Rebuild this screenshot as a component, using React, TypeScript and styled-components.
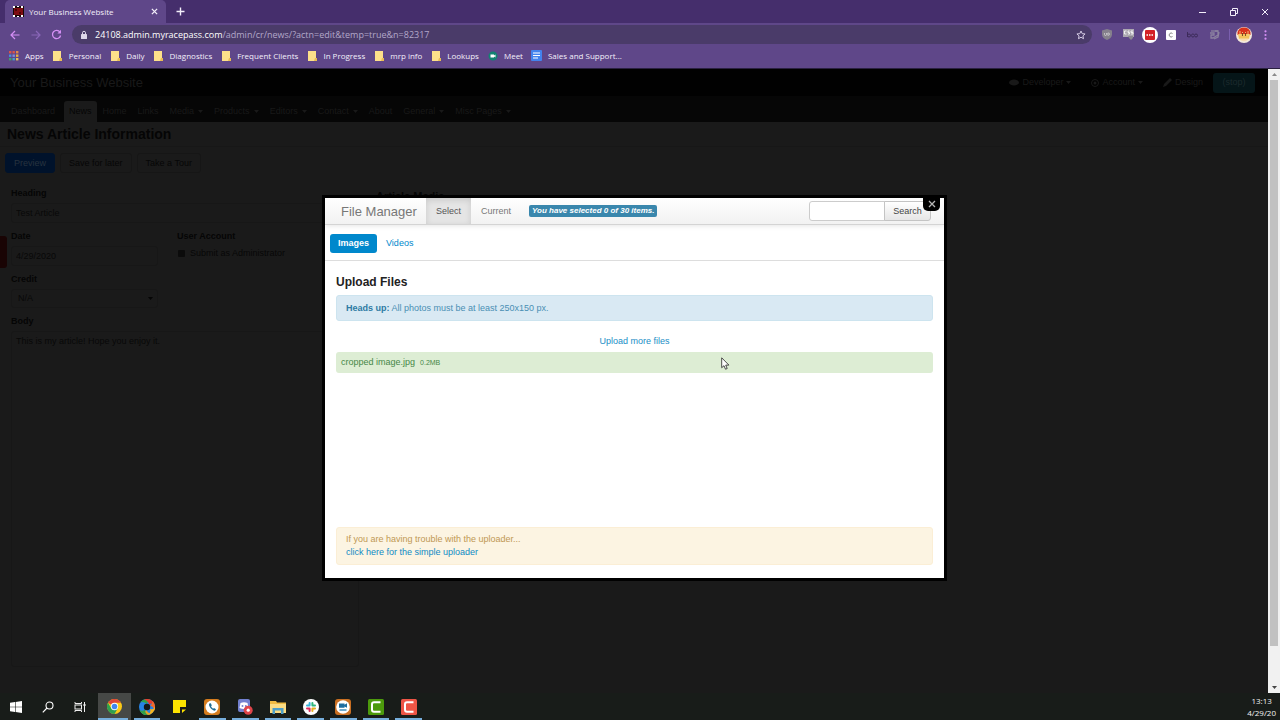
import React from "react";
import styled, { createGlobalStyle, css } from "styled-components";

const GlobalStyle = createGlobalStyle`
  * { box-sizing: border-box; }
  body { margin: 0; background: #1a1a1a; font-family: "Liberation Sans", Arial, sans-serif; font-size: 9px; line-height: 13px; }
  button, input, select, textarea { font: inherit; margin: 0; padding: 0; border: 0; background: none; color: inherit; border-radius: 0; outline: none; }
  h1, h2, p { margin: 0; }
  a { text-decoration: none; }
  svg { display: block; flex: none; }
`;

const uiFont = '"Open Sans", "Noto Sans", sans-serif';

const Screen = styled.div`
  min-height: 100vh;
  display: flex;
  flex-direction: column;
`;

/* ---------- browser chrome ---------- */
const Browser = styled.header`
  font-family: ${uiFont};
  color: #f3effa;
  background: #5f4789;
  border-bottom: 1px solid #2a2140;
`;
const TabStrip = styled.div`
  height: 23px;
  display: flex;
  align-items: center;
  background: #452e6c;
  padding-left: 5px;
`;
const Tab = styled.div`
  width: 161px;
  height: 23px;
  display: flex;
  align-items: center;
  gap: 5px;
  padding: 0 6px 0 8px;
  background: #5f4789;
  border-radius: 5px 5px 0 0;
  font-size: 8px;
`;
const TabTitle = styled.span`
  flex: 1;
`;
const IconButton = styled.button<{ $w?: number; $color?: string }>`
  width: ${(p) => p.$w ?? 12}px;
  height: 20px;
  display: flex;
  align-items: center;
  justify-content: center;
  color: ${(p) => p.$color ?? "#f3effa"};
`;
const NewTab = styled(IconButton)`
  margin-left: 8px;
`;
const WindowButtons = styled.div`
  margin-left: auto;
  display: flex;
`;
const Toolbar = styled.div`
  height: 23px;
  display: flex;
  align-items: center;
  padding: 0 4px;
`;
const Omnibox = styled.div`
  flex: 1;
  height: 19px;
  margin: 0 4px 0 5px;
  padding: 0 3px 0 8px;
  display: flex;
  align-items: center;
  gap: 7px;
  border-radius: 10px;
  background: #4a3b69;
  font-size: 9px;
`;
const Address = styled.div`
  flex: 1;
  color: #b3a8c9;
  white-space: nowrap;
`;
const Host = styled.span`
  color: #ffffff;
`;
const Extensions = styled.div`
  width: 129px;
  display: grid;
  grid-template-columns: repeat(6, 1fr);
  justify-items: center;
`;
const Divider = styled.span`
  width: 1px;
  height: 11px;
  margin: 0 3px 0 4px;
  background: #7a5fae;
`;
const Bookmarks = styled.nav`
  height: 22px;
  display: flex;
  align-items: center;
  gap: 8px;
  padding: 0 8px 3px;
  font-size: 8px;
`;
const Bookmark = styled.a`
  display: flex;
  align-items: center;
  gap: 5px;
  color: #f3effa;
  white-space: nowrap;
`;
const BookmarkIcon = styled.span`
  width: 12px;
  display: flex;
  justify-content: center;
`;

/* ---------- dimmed admin page ---------- */
const Viewport = styled.div`
  flex: 1;
  display: flex;
`;
const Page = styled.main`
  flex: 1;
  position: relative;
  background: #1a1a1a;
  color: #050505;
`;
const SiteBar = styled.div`
  height: 27px;
  display: flex;
  align-items: center;
  background: #010101;
  padding: 0 13px 0 10px;
  color: #131313;
`;
const SiteName = styled.a`
  flex: 1;
  font-size: 13px;
  color: #191919;
`;
const SiteLink = styled.a`
  display: flex;
  align-items: center;
  gap: 3px;
  margin-right: 20px;
  color: #191919;
`;
const StopButton = styled.button`
  height: 20px;
  width: 42px;
  margin-left: -10px;
  border-radius: 3px;
  background: #051518;
  color: #1c2a2d;
`;
const SiteNav = styled.nav`
  height: 26px;
  display: flex;
  align-items: flex-end;
  background: #060606;
  padding-left: 6px;
`;
const SiteTab = styled.a<{ $active?: boolean }>`
  height: 21px;
  display: flex;
  align-items: center;
  gap: 4px;
  padding: 0 5px;
  margin-right: 1px;
  color: #191919;
  ${(p) => p.$active && css`
    background: #1a1a1a;
    color: #050505;
    border-radius: 3px 3px 0 0;
    margin: 0 1px 0 3px;
  `}
`;
const Title = styled.h1`
  font-size: 14px;
  line-height: 24px;
  padding: 0 7px;
  border-bottom: 1px solid #171717;
`;
const Actions = styled.div`
  display: flex;
  gap: 5px;
  padding: 6px 5px 0;
`;
const ActionButton = styled.button<{ $primary?: boolean }>`
  height: 20px;
  padding: 0 8px;
  border: 1px solid ${(p) => (p.$primary ? "#00122b" : "#161616")};
  border-radius: 3px;
  background: ${(p) => (p.$primary ? "#00122b" : "#1a1a1a")};
  color: ${(p) => (p.$primary ? "#27323f" : "#060606")};
`;
const Form = styled.form`
  width: 348px;
  margin: 14px 0 0 11px;
  display: flex;
  flex-direction: column;
  gap: 7px;
`;
const Row = styled.div`
  display: flex;
  gap: 19px;
`;
const Field = styled.div<{ $w?: number }>`
  width: ${(p) => (p.$w ? `${p.$w}px` : "auto")};
  display: flex;
  flex-direction: column;
  gap: 3px;
`;
const Label = styled.label`
  font-weight: bold;
`;
const inputLook = css`
  width: 100%;
  height: 20px;
  padding: 0 4px;
  border: 1px solid #171717;
  border-radius: 3px;
  color: #080808;
`;
const TextInput = styled.input`
  ${inputLook}
`;
const SelectBox = styled.div`
  position: relative;
  svg { position: absolute; right: 5px; top: 8px; }
`;
const Select = styled.select`
  ${inputLook}
  appearance: none;
  height: 19px;
  padding-left: 6px;
`;
const TextArea = styled.textarea`
  ${inputLook}
  height: 336px;
  padding: 3px 4px;
  resize: none;
  display: block;
`;
const CheckLabel = styled.label`
  display: flex;
  align-items: center;
  gap: 5px;
  padding: 1px 0 0 1px;
  color: #070707;
`;
const Checkbox = styled.input`
  appearance: none;
  width: 7px;
  height: 7px;
  border-radius: 1px;
  background: #0b0b0b;
`;
const SideTab = styled.button`
  position: absolute;
  left: 0;
  top: 167px;
  width: 7px;
  height: 32px;
  border-radius: 0 3px 3px 0;
  background: #190404;
`;
const MediaHeading = styled.h2`
  position: absolute;
  left: 376px;
  top: 120px;
  font-size: 11px;
  line-height: 14px;
`;

/* ---------- dialog ---------- */
const Overlay = styled.div`
  position: absolute;
  inset: 0;
  display: flex;
  align-items: center;
  justify-content: center;
  padding: 14px 0 0 1px;
`;
const Dialog = styled.section`
  position: relative;
  width: 100%;
  max-width: 625px;
  border: 3px solid #000;
  background: #fff;
  color: #333;
`;
const CloseButton = styled.button`
  position: absolute;
  right: 4px;
  top: -1px;
  width: 17px;
  height: 14px;
  display: flex;
  align-items: center;
  justify-content: center;
  border-radius: 0 0 5px 5px;
  background: #000;
  color: #b5b5b5;
`;
const DialogBar = styled.div`
  height: 27px;
  display: flex;
  align-items: stretch;
  padding: 0 13px 0 16px;
  background: linear-gradient(#ffffff, #f2f2f2);
  border-bottom: 1px solid #d4d4d4;
  box-shadow: 0 1px 5px rgba(0, 0, 0, 0.1);
  color: #777;
`;
const DialogTitle = styled.h2`
  width: 85px;
  font-size: 13px;
  font-weight: normal;
  line-height: 27px;
`;
const BarTab = styled.button<{ $active?: boolean }>`
  padding: 0 10px;
  color: ${(p) => (p.$active ? "#555" : "#777")};
  ${(p) => p.$active && css`
    background: #e5e5e5;
    box-shadow: inset 0 2px 6px rgba(0, 0, 0, 0.125);
  `}
`;
const Counter = styled.span`
  align-self: center;
  margin: 0 auto 1px 8px;
  padding: 0 3px;
  border-radius: 2px;
  background: #3a87ad;
  color: #fff;
  font-size: 8px;
  line-height: 12px;
  font-weight: bold;
  font-style: italic;
  white-space: nowrap;
`;
const Search = styled.form`
  display: flex;
  align-items: center;
`;
const SearchInput = styled.input`
  width: 76px;
  height: 20px;
  padding: 0 4px;
  border: 1px solid #ccc;
  border-radius: 3px 0 0 3px;
  background: #fff;
`;
const SearchButton = styled.button`
  width: 47px;
  height: 20px;
  margin-left: -1px;
  border: 1px solid #c4c4c4;
  border-radius: 0 3px 3px 0;
  background: linear-gradient(#fff, #e6e6e6);
  color: #444;
`;
const Pills = styled.nav`
  display: flex;
  height: 36px;
  padding: 9px 5px 0;
  gap: 1px;
  border-bottom: 1px solid #ddd;
`;
const Pill = styled.a<{ $active?: boolean }>`
  height: 19px;
  padding: 0 8px;
  line-height: 19px;
  border-radius: 3px;
  color: #0088cc;
  ${(p) => p.$active && css`
    background: #0088cc;
    color: #fff;
    font-weight: bold;
  `}
`;
const DialogBody = styled.div`
  min-height: 317px;
  padding: 13px 11px;
  display: flex;
  flex-direction: column;
`;
const SectionTitle = styled.h2`
  font-size: 12px;
  line-height: 16px;
  color: #222;
`;
const Notice = styled.p<{ $kind: "info" | "warning" }>`
  padding: 5px 9px;
  border: 1px solid ${(p) => (p.$kind === "info" ? "#cde4ef" : "#fbeed5")};
  border-radius: 3px;
  background: ${(p) => (p.$kind === "info" ? "#d9e9f3" : "#fcf4e2")};
  color: ${(p) => (p.$kind === "info" ? "#4a8fb3" : "#c09853")};
  strong { color: #2f7ba3; }
  a { color: #0f8ac4; }
`;
const InfoNotice = styled(Notice)`
  margin-top: 5px;
  line-height: 14px;
`;
const UploadMore = styled.a`
  align-self: center;
  margin: 14px 0 4px;
  color: #1a8ec6;
`;
const FileRow = styled.div`
  height: 21px;
  display: flex;
  align-items: center;
  gap: 5px;
  padding: 0 5px;
  border-radius: 3px;
  background: #ddedd4;
  color: #468847;
  small { font-size: 7px; }
`;
const WarningNotice = styled(Notice)`
  margin-top: auto;
`;
const Cursor = styled.svg`
  position: absolute;
  left: 396px;
  top: 159px;
`;

/* ---------- scrollbar and taskbar ---------- */
const Scrollbar = styled.div`
  width: 12px;
  display: flex;
  flex-direction: column;
  align-items: center;
  background: #f1f1f1;
`;
const ScrollButton = styled.button`
  width: 12px;
  height: 11px;
  display: flex;
  align-items: center;
  justify-content: center;
`;
const ScrollTrack = styled.div`
  flex: 1;
  width: 8px;
`;
const ScrollThumb = styled.div`
  height: 94%;
  background: #c1c1c1;
`;
const Taskbar = styled.footer`
  height: 27px;
  display: flex;
  background: #181c19;
  color: #f2f2f2;
  font-family: ${uiFont};
`;
const TaskSystem = styled.div`
  display: flex;
  margin-right: 2px;
`;
const TaskApps = styled.div`
  width: 327px;
  display: grid;
  grid-template-columns: repeat(10, 1fr);
`;
const TaskButton = styled.button<{ $open?: boolean; $active?: boolean }>`
  min-width: 32px;
  height: 27px;
  display: flex;
  align-items: center;
  justify-content: center;
  position: relative;
  background: ${(p) => (p.$active ? "#464846" : "transparent")};
  ${(p) => p.$open && css`
    &::after {
      content: "";
      position: absolute;
      left: ${p.$active ? 0 : 3}px;
      right: 3px;
      bottom: 0;
      height: 2px;
      background: #76aedc;
    }
  `}
`;
const Clock = styled.time`
  margin-left: auto;
  padding: 2px 4px 0 0;
  font-size: 8px;
  line-height: 12px;
  text-align: center;
`;

/* ---------- icons ---------- */
const Caret = () => (
  <svg width="5" height="3" viewBox="0 0 5 3"><path d="M0 0h5L2.5 3z" fill="currentColor" /></svg>
);
const Cross = ({ size = 7, w = 1.2 }: { size?: number; w?: number }) => (
  <svg width={size} height={size} viewBox="0 0 8 8"><path d="M1 1l6 6M7 1L1 7" stroke="currentColor" strokeWidth={w} fill="none" /></svg>
);
const Favicon = () => (
  <svg width="11" height="11" viewBox="0 0 11 11">
    <rect width="11" height="11" fill="#160808" />
    <rect x="1" y="2" width="9" height="7" fill="#7d0d12" />
    <path d="M0 0h2v2H0zM4 0h2v1H4zM8 0h2v2H8zM0 9h2v2H0zM4 10h2v1H4zM8 9h2v2H8z" fill="#fff" />
    <path d="M2 3h2v2H2zM6 6h2v2H6z" fill="#4a0508" />
  </svg>
);
const Folder = () => (
  <svg width="9" height="10" viewBox="0 0 9 10"><path d="M0 0h8v7l1 1v2H0z" fill="#fde08a" /><path d="M7 7h2v3H6z" fill="#e9bd55" /></svg>
);
const AppsGrid = () => (
  <svg width="10" height="10" viewBox="0 0 10 10">
    {["#d9534a", "#d9534a", "#e0884a", "#4a8be0", "#7e8fd8", "#e8b040", "#3fa565", "#45a0c8", "#e8c05a"].map((c, i) => (
      <rect key={i} x={(i % 3) * 3.5} y={Math.floor(i / 3) * 3.5} width="2.4" height="2.4" fill={c} />
    ))}
  </svg>
);
const MeetIcon = () => (
  <svg width="10" height="10" viewBox="0 0 10 10"><circle cx="5" cy="5" r="4.5" fill="#128272" /><path d="M2.5 3.5h3.5v1l1.5-1v3L6 5.6v.9H2.5z" fill="#fff" /></svg>
);
const DocsIcon = () => (
  <svg width="11" height="11" viewBox="0 0 11 11"><rect width="11" height="11" rx="1" fill="#4383ee" /><path d="M2 3h7M2 5.5h7M2 8h5" stroke="#fff" strokeWidth="1.2" /></svg>
);
const Star = () => (
  <svg width="10" height="10" viewBox="0 0 24 24" fill="none" stroke="currentColor" strokeWidth="2.4"><path d="M12 2.5l2.9 6.3 6.9.7-5.2 4.6 1.5 6.800L12 17.400l-6.100 3.500 1.500-6.800L2.200 9.500l6.900-.7z" /></svg>
);
const Lock = () => (
  <svg width="8" height="10" viewBox="0 0 8 10"><rect x="1" y="4" width="6" height="5" rx=".6" fill="#dcd5e8" /><path d="M2.5 4.5V2.8a1.5 1.5 0 013 0v1.700" stroke="#dcd5e8" fill="none" /></svg>
);
const Arrow = ({ flip }: { flip?: boolean }) => (
  <svg width="10" height="10" viewBox="0 0 10 10" fill="none" stroke="currentColor" strokeWidth="1.2">
    {flip ? <path d="M.5 5h8.500M5 1l4 4-4 4" /> : <path d="M9.500 5H1M5 1L1 5l4 4" />}
  </svg>
);
const Reload = () => (
  <svg width="11" height="11" viewBox="0 0 11 11" fill="none" stroke="currentColor" strokeWidth="1.3"><path d="M9 3.200A4.100 4.100 0 109.600 6.500" /><path d="M10 .8v3.600H6.400z" fill="currentColor" stroke="none" /></svg>
);
const Shield = () => (
  <svg width="10" height="11" viewBox="0 0 10 11"><path d="M5 0l5 1.500v4C10 8 8 10 5 11 2 10 0 8 0 5.500v-4z" fill="#85808c" /><path d="M2.500 4v1.500q0 1 1 1t1-1V4M5.800 4v2.300h.6q1.100-.2 1.100-1.200T6.400 4z" stroke="#ddd" strokeWidth=".7" fill="none" /></svg>
);
const CssIcon = () => (
  <svg width="11" height="11" viewBox="0 0 11 11"><rect width="11" height="8" fill="#aba7b0" /><path d="M3.500 2H1.500v3h2M6.500 2H5v1.500h1.500V5H5M10 2H8v1.500h2V5H8" stroke="#fff" strokeWidth=".8" fill="none" /><path d="M5 7h5v2L8 11 6 9z" fill="#8b8891" /></svg>
);
const RedDots = () => (
  <svg width="16" height="16" viewBox="0 0 16 16"><circle cx="8" cy="8" r="8" fill="#fff" /><rect x="3" y="3" width="10" height="10" rx="1" fill="#d32027" /><path d="M4.500 8h7" stroke="#fff" strokeWidth="1.5" strokeDasharray="1.5 1" /></svg>
);
const CSquare = () => (
  <svg width="10" height="10" viewBox="0 0 10 10"><rect width="10" height="10" rx="1" fill="#fff" /><path d="M6.500 3.500a2 2 0 100 3" stroke="#888" fill="none" /></svg>
);
const Bco = () => (
  <svg width="11" height="6" viewBox="0 0 11 6" fill="none" stroke="#3c2b59" strokeWidth="1"><path d="M.5 0v5M7 2.500a1.500 1.500 0 100 2" /><circle cx="2" cy="3.5" r="1.5" /><circle cx="9" cy="3.5" r="1.5" /></svg>
);
const Swirl = () => (
  <svg width="11" height="10" viewBox="0 0 11 10" fill="none" stroke="#8c82a0" strokeWidth="1.3"><path d="M1 3h4v2H2v3h2l5-3V1H6M5 9l4-2 1-5" /><path d="M2 1h7" /></svg>
);
const Avatar = () => (
  <svg width="16" height="16" viewBox="0 0 16 16"><circle cx="8" cy="8" r="8" fill="#f4e9dc" /><path d="M1.500 5a7 7 0 0113 0v3h-13z" fill="#d8321c" /><path d="M2 7h12l-1 5H3z" fill="#f3c35c" /><path d="M4 4v5M6.500 5v4M9.500 5v4M12 4v5" stroke="#f8d48c" strokeWidth=".8" /><path d="M6.500 6v3M9.500 6v3" stroke="#5a2612" strokeWidth=".8" /><path d="M3 11.500h10a6 6 0 01-10 0z" fill="#f8dcae" /></svg>
);
const Dots = () => (
  <svg width="3" height="10" viewBox="0 0 3 10" fill="currentColor"><circle cx="1.5" cy="1.3" r="1.1" /><circle cx="1.5" cy="5" r="1.1" /><circle cx="1.5" cy="8.7" r="1.1" /></svg>
);

const WindowsLogo = () => (
  <svg width="12" height="12" viewBox="0 0 12 12"><path d="M0 1.700L5 1v4.700H0zM5.600.9L12 0v5.700H5.600zM0 6.300h5V11l-5-.7zM5.600 6.300H12V12l-6.400-.9z" fill="#fff" /></svg>
);
const SearchGlyph = () => (
  <svg width="12" height="12" viewBox="0 0 12 12" fill="none" stroke="#fff" strokeWidth="1.1"><circle cx="7.5" cy="4.5" r="3.5" /><path d="M5 7L.8 11.400" /></svg>
);
const TaskView = () => (
  <svg width="12" height="12" viewBox="0 0 12 12" fill="none" stroke="#eee"><path d="M1 1v1.500h6.500V1M1 11V9.500h6.500V11" /><rect x="1" y="4" width="6.5" height="4" /><path d="M10.500 1v10" /><path d="M9.500 4h2" strokeWidth="2" /></svg>
);
const ChromeLogo = () => (
  <svg width="15" height="15" viewBox="0 0 16 16"><circle cx="8" cy="8" r="8" fill="#fbc916" /><path d="M8 8L1.070 4A8 8 0 0114.930 4H8z" fill="#e0473a" /><path d="M1.070 4A8 8 0 008 16l3.460-6L8 8 4.540 10z" fill="#2fa04f" /><circle cx="8" cy="8" r="3.9" fill="#fff" /><circle cx="8" cy="8" r="3" fill="#4286f0" /></svg>
);
const Pinwheel = () => (
  <svg width="16" height="16" viewBox="0 0 16 16">
    <circle cx="8" cy="8" r="8" fill="#2684e6" />
    <path d="M1.500 3.300A8 8 0 0113 1.800Q9 1.500 7.500 5 5 2 1.500 3.300z" fill="#30a14a" />
    <path d="M5 .6A8 8 0 0115.800 6Q14 3.500 10 5.500 9 1.500 5 .6z" fill="#e33b2e" />
    <path d="M13 1.800A8 8 0 0115 12q0-5-4-5 3-2 2-5.200z" fill="#f2682a" />
    <path d="M16 7.500A8 8 0 018.500 16q4-2 2.500-6 4 1 5-2.500z" fill="#f8b51c" />
    <path d="M12.500 14.600A8 8 0 011.500 12.600q4 1.400 6-1.600 1 3 5 3.600z" fill="#e8a322" />
    <path d="M9 16A8 8 0 01.5 10.800Q3 13 6 10.500q0 4 3 5.500z" fill="#30a14a" />
    <circle cx="8" cy="8" r="3.2" fill="#14181a" />
  </svg>
);
const StickyNote = () => (
  <svg width="13" height="13" viewBox="0 0 13 13"><path d="M0 0h13v8l-5 5H0z" fill="#fde300" /><path d="M7 7h6v2L9 13H7z" fill="#1b1b1b" /><path d="M9 13V9.500h4z" fill="#fde300" /></svg>
);
const PhoneApp = () => (
  <svg width="16" height="16" viewBox="0 0 16 16"><rect width="16" height="16" rx="3" fill="#d57c1e" /><circle cx="8" cy="8" r="6.5" fill="#fff" /><path d="M5.200 4.500c-1 2.500 2.500 7 5.800 7.200l1-1.500-2-1.200-.9.700Q7.500 8.800 7 7.300l.8-.8-.9-2.300z" fill="#1f6c94" /></svg>
);
const DiscordApp = () => (
  <svg width="16" height="16" viewBox="0 0 16 16"><rect x="1" width="12" height="13" rx="2" fill="#7280cf" /><path d="M3.500 4Q7 2.500 10.500 4L11.500 9Q7 11 2.500 9z" fill="#fff" /><circle cx="5.5" cy="7" r="1" fill="#7280cf" /><circle cx="8.8" cy="7" r="1" fill="#7280cf" /><circle cx="11.2" cy="11.2" r="4.5" fill="#e0454a" /><circle cx="11.2" cy="11.2" r="1.6" fill="#fff" /></svg>
);
const Explorer = () => (
  <svg width="16" height="14" viewBox="0 0 16 14"><path d="M0 1h6l1 1.500h9V13H0z" fill="#f0bb43" /><path d="M0 4h16v9H0z" fill="#fadc84" /><path d="M2.500 14V8h11v6H11v-3.500H5V14z" fill="#4e9fc8" /></svg>
);
const SlackApp = () => (
  <svg width="16" height="16" viewBox="0 0 16 16"><circle cx="8" cy="8" r="8" fill="#fff" /><g strokeWidth="2" strokeLinecap="round"><path d="M6.600 4v2.600M4 6.600h2.600" stroke="#36b6dc" /><path d="M9.400 4v2.600M9.400 6.600H12" stroke="#2eb67d" /><path d="M9.400 9.400V12M9.400 9.400H12" stroke="#e6ac22" /><path d="M6.600 9.400V12M4 9.400h2.600" stroke="#df2b5d" /></g></svg>
);
const MeetingApp = () => (
  <svg width="16" height="16" viewBox="0 0 16 16"><rect width="16" height="16" rx="3" fill="#c96f22" /><circle cx="8" cy="8" r="6.8" fill="#fff" /><path d="M4 4.500h5.500v1.200L12 4.300v4.400L9.500 7.400v1.300H4z" fill="#1c6da0" /><path d="M4.500 11h7" stroke="#3f8fbe" strokeWidth="1.5" /></svg>
);
const Camtasia = ({ color }: { color: string }) => (
  <svg width="16" height="16" viewBox="0 0 16 16"><rect width="16" height="16" rx="1.5" fill={color} /><path d="M12.500 3.200H6Q4 3.200 4 5.200v5.600q0 2 2 2h6.500" fill="none" stroke="#fff" strokeWidth="2" /></svg>
);

const bookmarks: [string, React.ReactNode][] = [
  ["Apps", <AppsGrid />],
  ["Personal", <Folder />],
  ["Daily", <Folder />],
  ["Diagnostics", <Folder />],
  ["Frequent Clients", <Folder />],
  ["In Progress", <Folder />],
  ["mrp info", <Folder />],
  ["Lookups", <Folder />],
  ["Meet", <MeetIcon />],
  ["Sales and Support...", <DocsIcon />],
];

const siteTabs: [string, boolean][] = [
  ["Dashboard", false],
  ["News", false],
  ["Home", false],
  ["Links", false],
  ["Media", true],
  ["Products", true],
  ["Editors", true],
  ["Contact", true],
  ["About", false],
  ["General", true],
  ["Misc Pages", true],
];

const apps: [string, React.ReactNode][] = [
  ["Chrome", <ChromeLogo />],
  ["Pinwheel", <Pinwheel />],
  ["Sticky Notes", <StickyNote />],
  ["Phone", <PhoneApp />],
  ["Discord", <DiscordApp />],
  ["File Explorer", <Explorer />],
  ["Slack", <SlackApp />],
  ["Meeting", <MeetingApp />],
  ["Camtasia", <Camtasia color="#4c9a0c" />],
  ["Recorder", <Camtasia color="#ee5546" />],
];

export default function App() {
  return (
    <Screen>
      <GlobalStyle />
      <Browser>
        <TabStrip>
          <Tab>
            <Favicon />
            <TabTitle>Your Business Website</TabTitle>
            <IconButton aria-label="Close tab"><Cross w={1.5} /></IconButton>
          </Tab>
          <NewTab aria-label="New tab">
            <svg width="9" height="9" viewBox="0 0 9 9"><path d="M4.500 0.500v8M.5 4.500h8" stroke="currentColor" strokeWidth="1.4" /></svg>
          </NewTab>
          <WindowButtons>
            <IconButton $w={31} aria-label="Minimize"><svg width="8" height="8" viewBox="0 0 8 8"><path d="M0 4.500h7" stroke="currentColor" /></svg></IconButton>
            <IconButton $w={31} aria-label="Restore"><svg width="8" height="8" viewBox="0 0 8 8" fill="none" stroke="currentColor"><path d="M.5 2.500h5v5h-5zM2.500 2V.5h5v5H6" /></svg></IconButton>
            <IconButton $w={31} aria-label="Close"><Cross size={8} w={1} /></IconButton>
          </WindowButtons>
        </TabStrip>
        <Toolbar>
          <IconButton $w={21} $color="#d58ff5" aria-label="Back"><Arrow /></IconButton>
          <IconButton $w={21} $color="#8a67b8" aria-label="Forward"><Arrow flip /></IconButton>
          <IconButton $w={21} $color="#d58ff5" aria-label="Reload"><Reload /></IconButton>
          <Omnibox>
            <Lock />
            <Address role="textbox" aria-label="Address" tabIndex={0}><Host>24108.admin.myracepass.com</Host>/admin/cr/news/?actn=edit&amp;temp=true&amp;n=82317</Address>
            <IconButton $w={16} $color="#d5cce4" aria-label="Bookmark this page"><Star /></IconButton>
          </Omnibox>
          <Extensions>
            <IconButton $w={16} aria-label="Ad blocker"><Shield /></IconButton>
            <IconButton $w={16} aria-label="CSS"><CssIcon /></IconButton>
            <IconButton $w={16} aria-label="Passwords"><RedDots /></IconButton>
            <IconButton $w={16} aria-label="Clip"><CSquare /></IconButton>
            <IconButton $w={16} aria-label="Board"><Bco /></IconButton>
            <IconButton $w={16} aria-label="Notes"><Swirl /></IconButton>
          </Extensions>
          <Divider />
          <IconButton $w={22} aria-label="Profile"><Avatar /></IconButton>
          <IconButton $w={21} $color="#d58ff5" aria-label="Menu"><Dots /></IconButton>
        </Toolbar>
        <Bookmarks>
          {bookmarks.map(([name, icon]) => (
            <Bookmark href="#" key={name}><BookmarkIcon>{icon}</BookmarkIcon>{name}</Bookmark>
          ))}
        </Bookmarks>
      </Browser>

      <Viewport>
        <Page>
          <SiteBar>
            <SiteName href="#">Your Business Website</SiteName>
            <SiteLink href="#"><svg width="10" height="7" viewBox="0 0 10 7"><ellipse cx="5" cy="3.5" rx="5" ry="3" fill="currentColor" /></svg>Developer <Caret /></SiteLink>
            <SiteLink href="#"><svg width="8" height="8" viewBox="0 0 8 8"><circle cx="4" cy="4" r="3.5" fill="none" stroke="currentColor" /><circle cx="4" cy="4" r="1.5" fill="currentColor" /></svg>Account <Caret /></SiteLink>
            <SiteLink href="#"><svg width="9" height="9" viewBox="0 0 9 9"><path d="M0 9l1-3 6-6 2 2-6 6z" fill="currentColor" /></svg>Design</SiteLink>
            <StopButton>(stop)</StopButton>
          </SiteBar>
          <SiteNav>
            {siteTabs.map(([name, menu]) => (
              <SiteTab href="#" key={name} $active={name === "News"}>{name}{menu && <Caret />}</SiteTab>
            ))}
          </SiteNav>
          <Title>News Article Information</Title>
          <Actions>
            <ActionButton $primary>Preview</ActionButton>
            <ActionButton>Save for later</ActionButton>
            <ActionButton>Take a Tour</ActionButton>
          </Actions>
          <Form>
            <Field>
              <Label htmlFor="heading">Heading</Label>
              <TextInput id="heading" defaultValue="Test Article" />
            </Field>
            <Row>
              <Field $w={147}>
                <Label htmlFor="date">Date</Label>
                <TextInput id="date" defaultValue="4/29/2020" />
              </Field>
              <Field>
                <Label as="span">User Account</Label>
                <CheckLabel><Checkbox type="checkbox" defaultChecked />Submit as Administrator</CheckLabel>
              </Field>
            </Row>
            <Field $w={147}>
              <Label htmlFor="credit">Credit</Label>
              <SelectBox>
                <Select id="credit"><option>N/A</option></Select>
                <Caret />
              </SelectBox>
            </Field>
            <Field>
              <Label htmlFor="body">Body</Label>
              <TextArea id="body" defaultValue="This is my article! Hope you enjoy it." />
            </Field>
          </Form>
          <MediaHeading>Article Media</MediaHeading>
          <SideTab aria-label="Open side panel" />

          <Overlay>
            <Dialog role="dialog" aria-label="File Manager">
              <DialogBar>
                <DialogTitle>File Manager</DialogTitle>
                <BarTab $active>Select</BarTab>
                <BarTab>Current</BarTab>
                <Counter>You have selected 0 of 30 items.</Counter>
                <Search>
                  <SearchInput aria-label="Search files" />
                  <SearchButton type="button">Search</SearchButton>
                </Search>
              </DialogBar>
              <Pills>
                <Pill href="#" $active>Images</Pill>
                <Pill href="#">Videos</Pill>
              </Pills>
              <DialogBody>
                <SectionTitle>Upload Files</SectionTitle>
                <InfoNotice $kind="info"><strong>Heads up:</strong> All photos must be at least 250x150 px.</InfoNotice>
                <UploadMore href="#">Upload more files</UploadMore>
                <FileRow>cropped image.jpg <small>0.2MB</small></FileRow>
                <WarningNotice $kind="warning">
                  If you are having trouble with the uploader...<br />
                  <a href="#">click here for the simple uploader</a>
                </WarningNotice>
              </DialogBody>
              <CloseButton aria-label="Close"><Cross size={8} w={1.3} /></CloseButton>
              <Cursor width="9" height="13" viewBox="0 0 9 13"><path d="M.7.8v9.900l2.300-2 1.500 3.500 1.700-.7-1.500-3.400h3.200z" fill="#fff" stroke="#222" strokeWidth=".8" /></Cursor>
            </Dialog>
          </Overlay>
        </Page>
        <Scrollbar>
          <ScrollButton aria-label="Scroll up"><svg width="5" height="3" viewBox="0 0 5 3"><path d="M0 3h5L2.500 0z" fill="#8a8a8a" /></svg></ScrollButton>
          <ScrollTrack><ScrollThumb /></ScrollTrack>
          <ScrollButton aria-label="Scroll down"><svg width="5" height="3" viewBox="0 0 5 3"><path d="M0 0h5L2.500 3z" fill="#444" /></svg></ScrollButton>
        </Scrollbar>
      </Viewport>

      <Taskbar>
        <TaskSystem>
          <TaskButton aria-label="Start"><WindowsLogo /></TaskButton>
          <TaskButton aria-label="Search"><SearchGlyph /></TaskButton>
          <TaskButton aria-label="Task view"><TaskView /></TaskButton>
        </TaskSystem>
        <TaskApps>
          {apps.map(([name, icon], i) => (
            <TaskButton key={name} aria-label={name} $active={i === 0} $open={i !== 2}>{icon}</TaskButton>
          ))}
        </TaskApps>
        <Clock><div>13:13</div><div>4/29/20</div></Clock>
      </Taskbar>
    </Screen>
  );
}
